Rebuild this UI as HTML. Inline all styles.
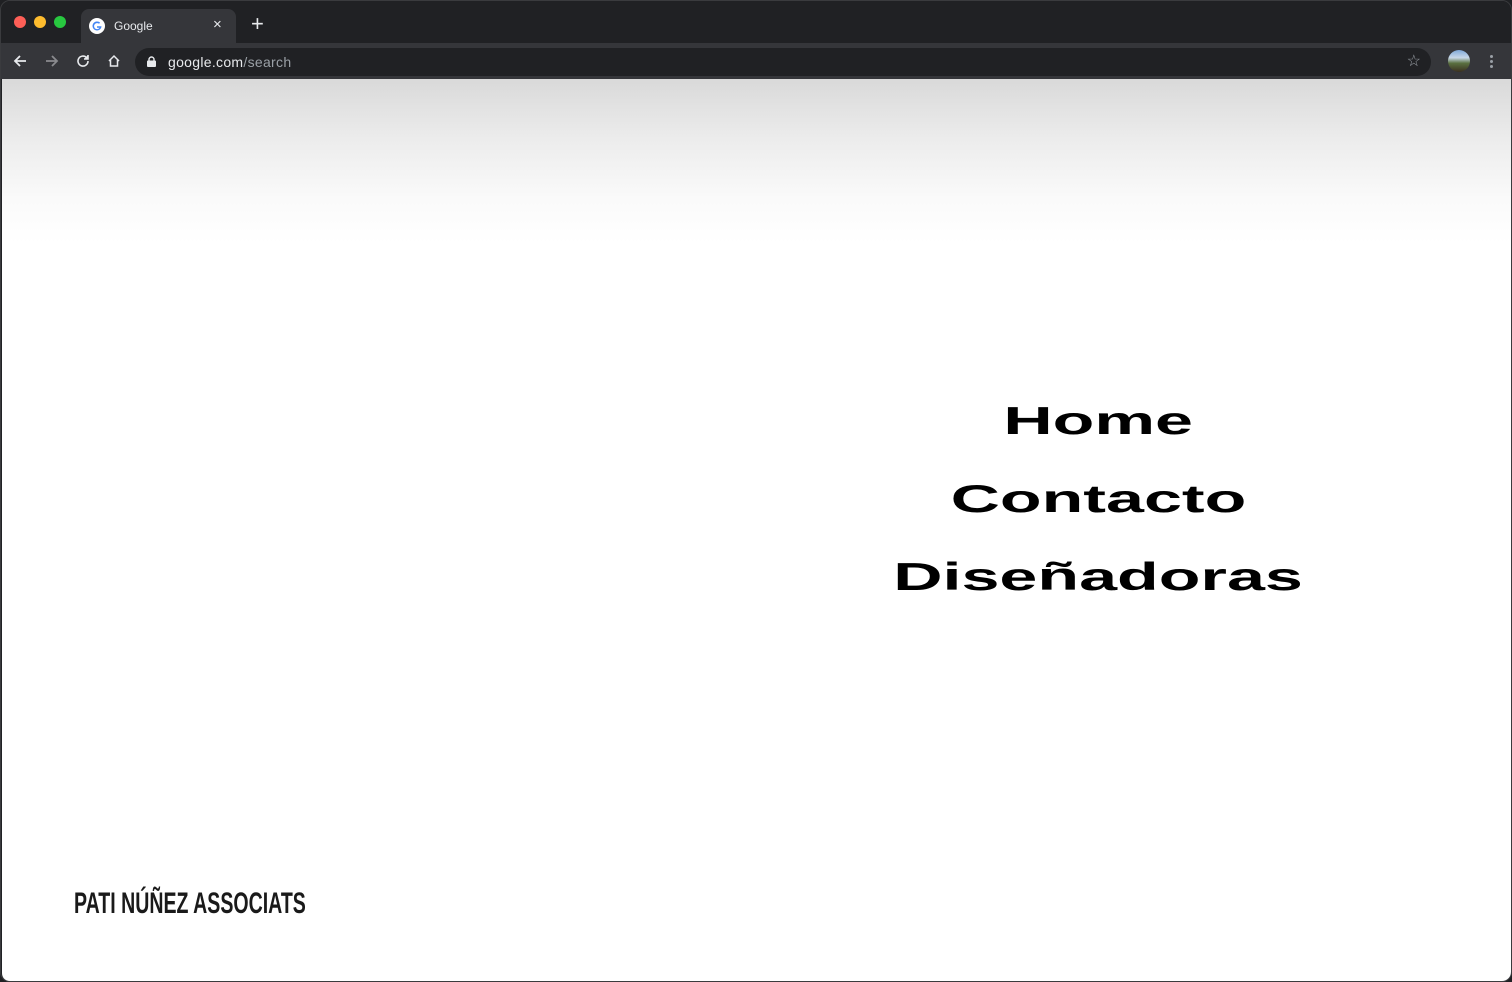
<!DOCTYPE html>
<html><head><meta charset="utf-8"><style>
*{margin:0;padding:0;box-sizing:border-box}
html,body{width:1512px;height:982px;overflow:hidden;background:#1f2023;font-family:"Liberation Sans",sans-serif}
.win{position:absolute;left:0;top:0;width:1512px;height:982px;border:1px solid #3a3b3e;border-radius:10px;overflow:hidden;background:#202124}
.tabbar{position:absolute;left:0;top:0;width:100%;height:42px;background:#202124}
.dot{position:absolute;top:15px;width:12px;height:12px;border-radius:50%}
.tab{position:absolute;left:80px;top:8px;width:155px;height:34px;background:#35363a;border-radius:8px 8px 0 0}
.toolbar{position:absolute;left:0;top:42px;width:100%;height:36px;background:#35363a}
.omni{position:absolute;left:134px;top:5px;width:1296px;height:28px;background:#202124;border-radius:14px}
.page{position:absolute;left:1px;top:78px;width:1510px;height:903px;background:linear-gradient(#d9d9d9 0px,#ececec 60px,#fafafa 120px,#fff 165px);border-radius:0 0 9px 9px}
.nav{position:absolute;left:0;width:100%;text-align:center}
.nav span{display:inline-block;font-weight:bold;font-size:39px;color:#000;transform:scaleX(1.75);letter-spacing:0}
.logo{position:absolute;left:72px;top:808px;font-size:30px;font-weight:bold;color:#1a1a1a;transform:scaleX(0.652);transform-origin:left;white-space:nowrap}
</style></head><body>
<div class="win">
<div class="tabbar">
<div class="dot" style="left:13px;background:#fe5f57"></div>
<div class="dot" style="left:33px;background:#febc2e"></div>
<div class="dot" style="left:53px;background:#28c840"></div>
<div class="tab">
<svg style="position:absolute;left:8px;top:9px" width="16" height="16" viewBox="0 0 16 16"><circle cx="8" cy="8" r="8" fill="#fff"/><path d="M12.5 8.2H8v1.6h2.6A3 3 0 1 1 10 5.8l1.1-1.1A4.5 4.5 0 1 0 12.5 8.2z" fill="#4285f4"/></svg>
<span style="position:absolute;left:33px;top:10px;font-size:12px;color:#e8eaed">Google</span>
<span style="position:absolute;left:132px;top:7px;font-size:15px;color:#e8eaed">×</span>
</div>
<span style="position:absolute;left:250px;top:12px;font-size:22px;color:#e8eaed;line-height:22px">+</span>
</div>
<div class="toolbar">
<svg style="position:absolute;left:12px;top:11px" width="14" height="14" viewBox="0 0 14 14" fill="none" stroke="#e8eaed" stroke-width="1.8"><path d="M13 7H2M7 2L2 7l5 5"/></svg>
<svg style="position:absolute;left:44px;top:11px" width="14" height="14" viewBox="0 0 14 14" fill="none" stroke="#8a8b8e" stroke-width="1.8"><path d="M1 7h11M7 2l5 5-5 5"/></svg>
<svg style="position:absolute;left:75px;top:11px" width="14" height="14" viewBox="0 0 14 14" fill="none" stroke="#e8eaed" stroke-width="1.6"><path d="M12 7a5 5 0 1 1-1.5-3.5"/><path d="M12 1v4H8" fill="#e8eaed"/></svg>
<svg style="position:absolute;left:106px;top:11px" width="14" height="14" viewBox="0 0 14 14" fill="none" stroke="#e8eaed" stroke-width="1.5"><path d="M2 7L7 2l5 5M3.5 6v6h7V6"/></svg>
<div class="omni">
<svg style="position:absolute;left:12px;top:8px" width="9" height="11" viewBox="0 0 9 11"><rect x="0" y="4.5" width="9" height="6.5" rx="1" fill="#e8eaed"/><path d="M2 5V3.5a2.5 2.5 0 0 1 5 0V5" fill="none" stroke="#e8eaed" stroke-width="1.4"/></svg>
<span style="position:absolute;left:33px;top:6px;font-size:14px;color:#e8eaed;letter-spacing:0.3px">google.com<span style="color:#9aa0a6">/search</span></span>
<span style="position:absolute;right:10px;top:3px;font-size:16px;color:#9aa0a6">☆</span>
</div>
<div style="position:absolute;left:1447px;top:7px;width:22px;height:22px;border-radius:50%;background:linear-gradient(#7fa8d8 0,#c8d8e8 35%,#5a7040 60%,#3a3020 100%)"></div>
<div style="position:absolute;left:1489px;top:12px;width:3px;height:3px;border-radius:50%;background:#9aa0a6;box-shadow:0 5px 0 #9aa0a6,0 10px 0 #9aa0a6"></div>
</div>
<div class="page">
<div class="nav" style="left:341px;top:321px"><span>Home</span></div>
<div class="nav" style="left:341px;top:399px"><span>Contacto</span></div>
<div class="nav" style="left:341px;top:477px"><span>Diseñadoras</span></div>
<div class="logo">PATI NÚÑEZ ASSOCIATS</div>
</div>
</div>
</body></html>
